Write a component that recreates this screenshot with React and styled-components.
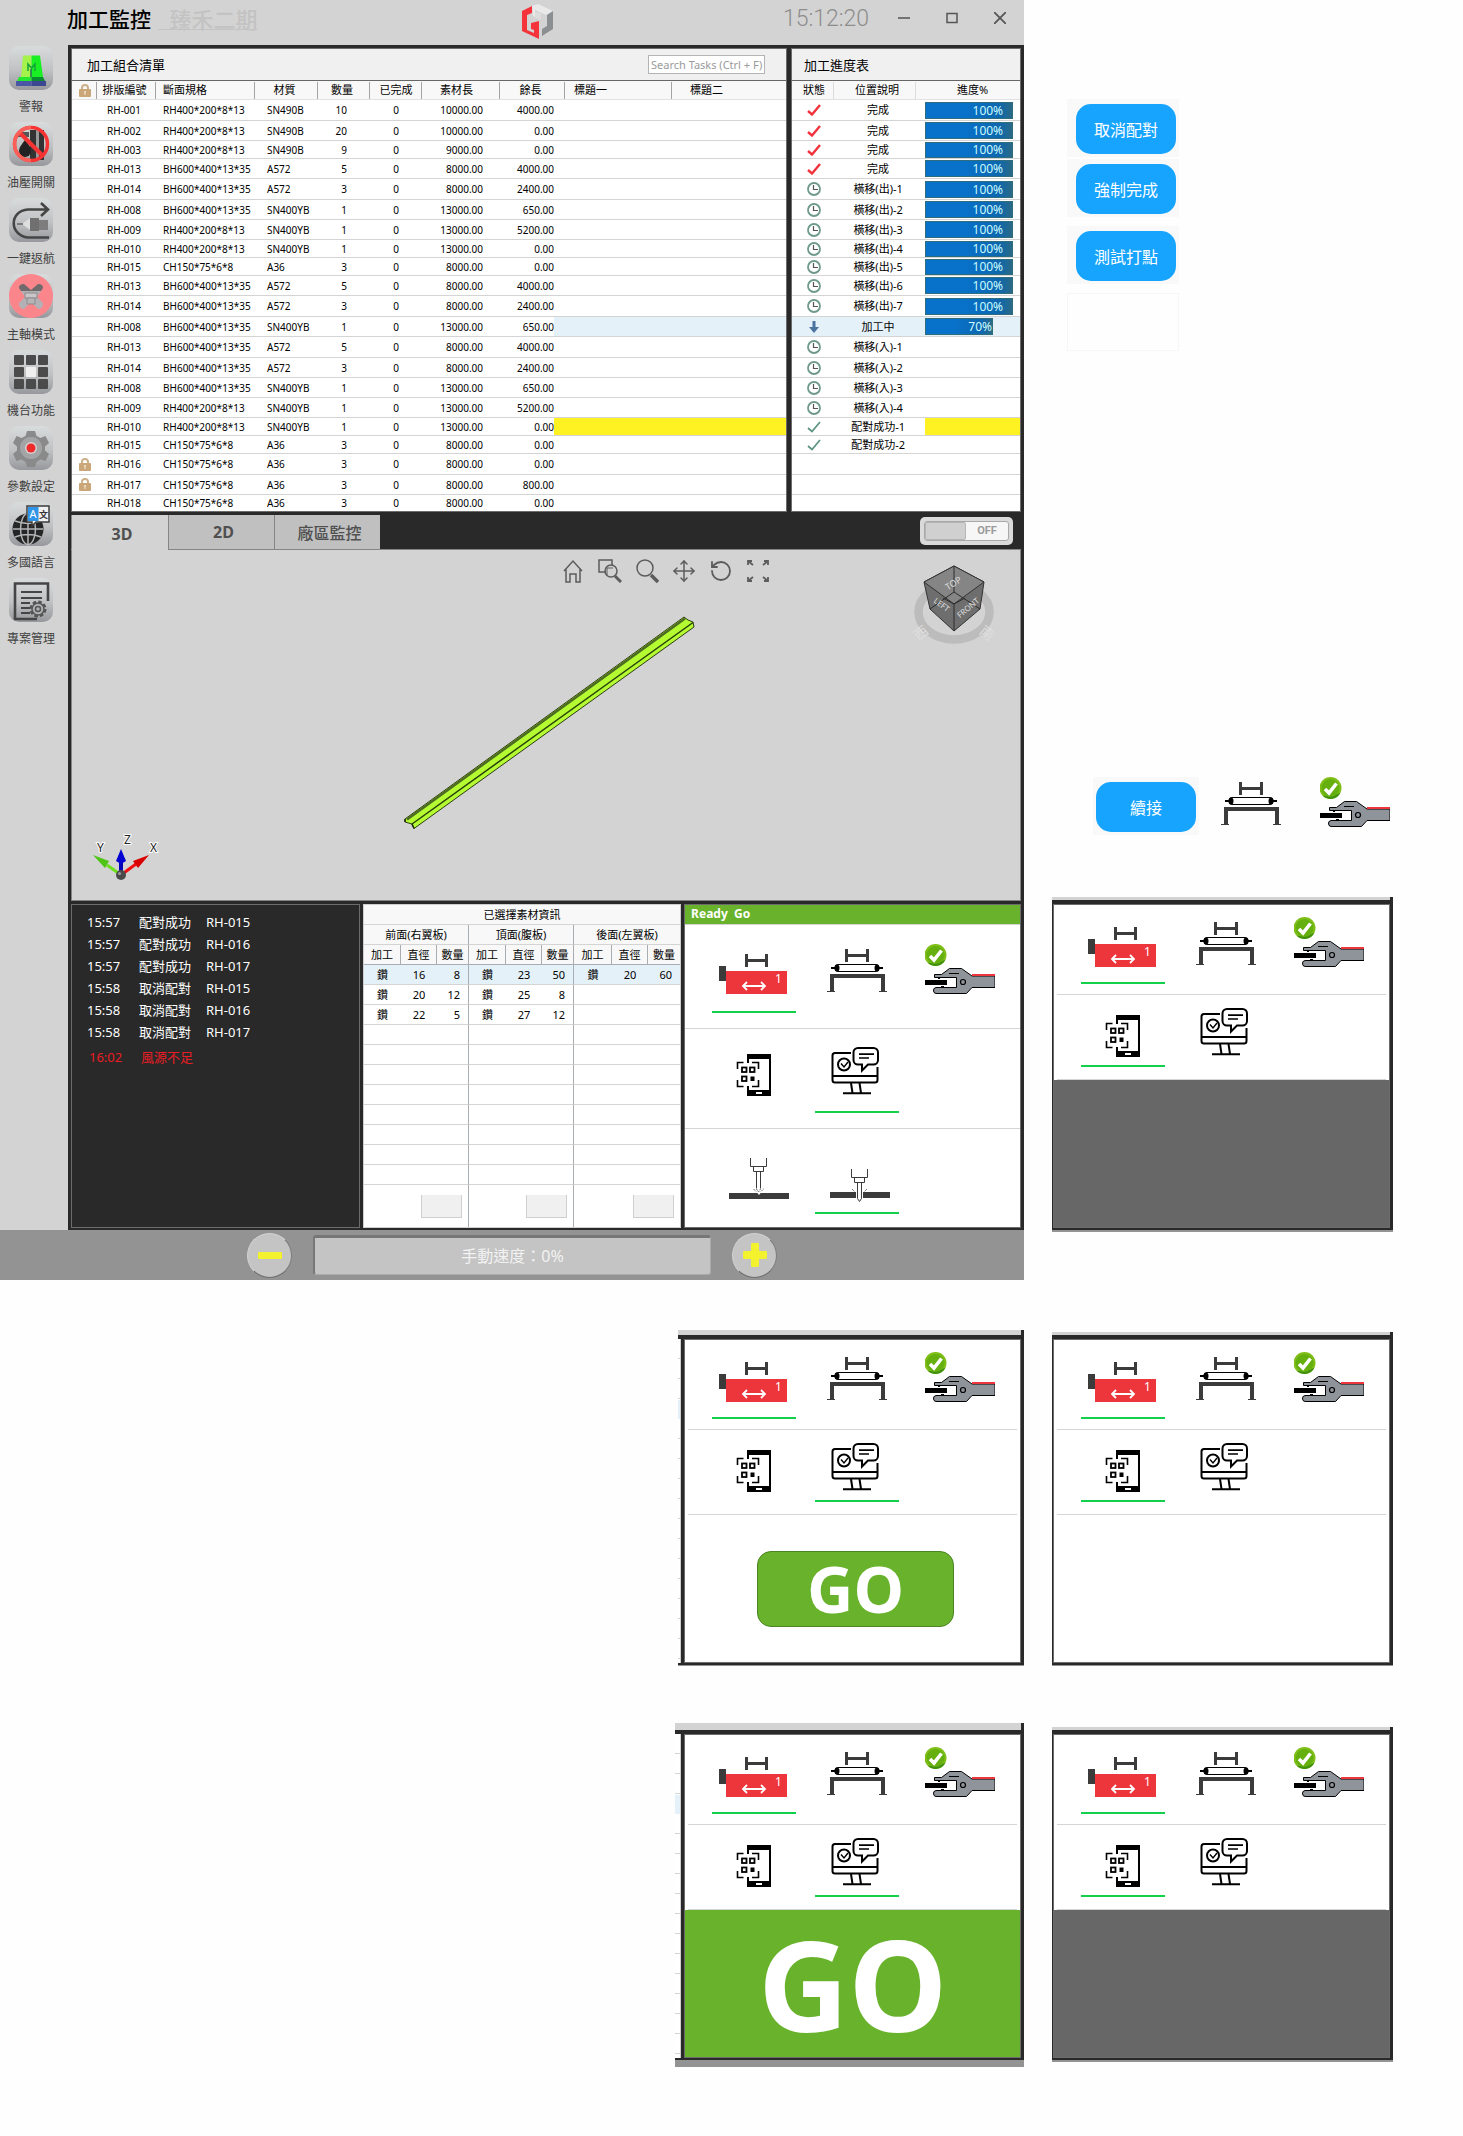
import React from "react";
import styled, { createGlobalStyle, css } from "styled-components";
import { Move, RotateCcw } from "lucide-react";

const INK = "#292929";
const EDGE = "#6c6c6c";
const SHELL = "#d3d3d3";
const RULE = "#d4d4d4";
const GREEN = "#68b22c";

const GlobalStyle = createGlobalStyle`
  *, *::before, *::after { box-sizing: border-box; }
  body {
    margin: 0;
    background: #fefefe;
    color: #000;
    font-family: "Noto Sans", "Noto Sans CJK TC", sans-serif;
    font-size: 11px;
  }
  button, input { font-family: inherit; }
  button { border: 0; padding: 0; background: none; cursor: pointer; }
  svg { display: block; flex: none; }
  table { border-collapse: separate; border-spacing: 0; table-layout: fixed; width: 100%; }
  th { font-weight: 400; }
`;

/* ---------- page ---------- */

const Page = styled.div`
  display: grid;
  grid-template-columns: 70% minmax(0, 1fr);
  padding-bottom: 69px;
`;

const LeftCell = styled.div`
  display: flex;
  justify-content: flex-end;
  align-items: flex-end;
  padding-top: ${(p) => p.$space}px;
`;

const RightCell = styled.div`
  display: flex;
  flex-direction: column;
  justify-content: ${(p) => (p.$low ? "flex-end" : "flex-start")};
  padding: ${(p) => p.$space}px 70px 0 28px;
`;

const Aside = styled.aside`
  display: flex;
  flex-direction: column;
  padding: 99px 70px 48px 28px;
`;

/* ---------- application window ---------- */

const AppWindow = styled.main`
  background: ${SHELL};
  display: flex;
  flex-direction: column;
`;

const TitleBar = styled.header`
  height: 45px;
  display: flex;
  align-items: flex-start;
`;

const TitleBlock = styled.div`
  flex: 0 0 51%;
  display: flex;
  padding-left: 67px;
  font-size: 21px;
  line-height: 38px;
`;

const Title = styled.h1`
  margin: 0;
  font-size: inherit;
  font-weight: 500;
`;

const Project = styled.span`
  color: #c3c3c3;
  font-size: 22px;
  font-weight: 500;
  margin-left: 7px;
  white-space: pre;
  text-decoration: underline;
  text-decoration-thickness: 1px;
`;

const LogoBox = styled.div`
  padding-top: 4px;
`;

const Clock = styled.time`
  margin-left: auto;
  margin-right: 11px;
  font-family: Roboto, sans-serif;
  font-size: 23px;
  font-weight: 300;
  line-height: 37px;
  color: #8d8d8d;
`;

const WindowButton = styled.button`
  width: 48px;
  height: 36px;
  display: grid;
  place-items: center;
`;

const Middle = styled.div`
  display: flex;
`;

const Sidebar = styled.nav`
  width: 68px;
  flex: none;
  padding: 1px 6px 0 0;
  display: flex;
  flex-direction: column;
  gap: 7px;
`;

const SideButton = styled.button`
  display: flex;
  flex-direction: column;
  align-items: center;
  gap: 9px;
  font-size: 12px;
  line-height: 16px;
  color: #3f3f3f;
`;

const SideTile = styled.span`
  width: 44px;
  height: 44px;
  border-radius: 10px;
  overflow: hidden;
  background: linear-gradient(#d9dcdc, #bfc1c2 55%, #97989d);
`;

const Frame = styled.div`
  flex: 1;
  min-width: 0;
  background: ${INK};
  padding: 3px 3px 2px;
  display: flex;
  flex-direction: column;
  gap: 3px;
`;

const Upper = styled.div`
  display: grid;
  grid-template-columns: minmax(0, 1fr) 230px;
  gap: 4px;
`;

const Panel = styled.section`
  background: #fff;
  border: 1px solid ${EDGE};
`;

const PanelHead = styled.div`
  height: 31px;
  background: #f0f0f0;
  display: flex;
  align-items: center;
  justify-content: space-between;
  padding: 0 21px 0 ${(p) => p.$inset}px;
`;

const PanelTitle = styled.h2`
  margin: 0;
  font-size: 13px;
  font-weight: 400;
`;

const SearchInput = styled.input`
  width: 117px;
  height: 19px;
  padding: 0;
  border: 1px solid #b4b4b4;
  background: #fff;
  font-size: 11px;
  text-align: center;
  &::placeholder { color: #9b9b9b; opacity: 1; }
`;

const DataTable = styled.table`
  font-size: 10px;
  line-height: 14px;
`;

const HeadRow = styled.tr`
  height: 20px;
  background: #f8f8f8;
`;

const HeadCell = styled.th`
  padding: 0 ${(p) => p.$right || 0}px 0 ${(p) => p.$left || 0}px;
  border-top: 1px solid #666;
  border-bottom: 1px solid #e2e2e2;
  font-size: 11px;
  text-align: ${(p) => p.$align || "center"};
  background: linear-gradient(${(p) => p.$rule || "#a4a4a4"}, ${(p) => p.$rule || "#a4a4a4"}) right center / 1px 17px no-repeat;
  &:last-child { background: none; }
  svg { margin: 0 auto; }
`;

const BodyRow = styled.tr`
  height: ${(p) => p.$height}px;
`;

const Cell = styled.td`
  padding: 0 ${(p) => p.$right || 0}px 0 ${(p) => p.$left || 0}px;
  border-bottom: 1px solid ${RULE};
  text-align: ${(p) => p.$align || "left"};
  font-size: ${(p) => p.$size || 10}px;
  background: ${(p) => p.$tint || "none"};
  white-space: nowrap;
  tr:last-child > & { border-bottom: 0; }
  svg { margin: 0 auto; }
`;

const Bar = styled.div`
  margin-left: 9px;
  height: ${(p) => p.$height}px;
  border: 1px solid #2f6c7c;
  background: linear-gradient(90deg, #0871c9 45%, #0d67ae 85%, #2a6a86);
  color: #cdfcff;
  font-size: 12px;
  line-height: ${(p) => p.$height - 2}px;
  text-align: right;
  padding-right: ${(p) => (p.$done ? 9 : 0)}px;
`;

/* ---------- tabs and viewer ---------- */

const ViewBlock = styled.section`
  display: flex;
  flex-direction: column;
`;

const TabBar = styled.div`
  height: 35px;
  display: flex;
`;

const Tab = styled.button`
  width: ${(p) => (p.$active ? 97 : 106)}px;
  padding-left: 4px;
  font-size: 16px;
  font-weight: ${(p) => (p.$cjk ? 500 : 700)};
  color: #505050;
  background: ${(p) => (p.$active ? SHELL : "#c0c0c0")};
  border-left: 1px solid #858585;
  border-bottom: 1px solid ${(p) => (p.$active ? SHELL : "#858585")};
  ${(p) => p.$active && css`padding-top: 4px;`}
`;

const TabFiller = styled.div`
  flex: 1;
  display: flex;
  justify-content: flex-end;
  padding: 2px 8px 0 0;
  border-bottom: 1px solid #858585;
`;

const Switch = styled.label`
  width: 93px;
  height: 28px;
  border-radius: 5px;
  background: #dadada;
  padding: 4px;
  position: relative;
  cursor: pointer;
`;

const SwitchInput = styled.input`
  position: absolute;
  inset: 0;
  margin: 0;
  opacity: 0;
`;

const SwitchTrack = styled.span`
  display: flex;
  height: 20px;
  border: 1px solid #a8a8a8;
  border-radius: 3px;
  background: #f6f6f6;
  color: #9b9b9b;
  font: 700 11px/18px Roboto, sans-serif;
  text-align: center;
`;

const SwitchKnob = styled.span`
  width: 41px;
  border: 1px solid #b5b5b5;
  border-radius: 2px;
  background: #d0d0d0;
`;

const SwitchText = styled.span`
  flex: 1;
`;

const Viewer = styled.div`
  position: relative;
  height: 351px;
  background: ${SHELL};
  border: solid #858585;
  border-width: 0 1px 1px;
`;

const ViewTools = styled.div`
  position: absolute;
  top: 9px;
  left: calc(51% + 5px);
  display: flex;
  gap: 13px;
  color: #5c5c5c;
`;

const ToolButton = styled.button`
  width: 24px;
  height: 24px;
  color: inherit;
`;

const Beam = styled.svg`
  position: absolute;
  top: 64px;
  left: calc(35% - 2px);
`;

const Cube = styled.svg`
  position: absolute;
  top: 13px;
  right: 22px;
`;

const Axes = styled.svg`
  position: absolute;
  left: 18px;
  bottom: 18px;
`;

/* ---------- lower row ---------- */

const Lower = styled.div`
  display: grid;
  grid-template-columns: 289px minmax(0, 1fr) 337px;
  gap: 3px;
  height: 324px;
`;

const Log = styled.ul`
  margin: 0;
  padding: 6px 15px;
  list-style: none;
  border: 1px solid ${EDGE};
  font-size: 13px;
  line-height: 22px;
  color: #fff;
`;

const LogLine = styled.li`
  display: grid;
  grid-template-columns: 52px 67px auto;
  ${(p) => p.$alert && css`color: #ec1c24; padding: 3px 0 0 2px;`}
`;

const InfoPanel = styled.section`
  background: #fff;
  border: 1px solid #cfcfcf;
`;

const InfoRow = styled.tr`
  height: ${(p) => (p.$foot ? 42 : 20)}px;
  line-height: 14px;
  background: ${(p) => (p.$head ? "#f8f8f8" : p.$picked ? "#e5f1f9" : "#fff")};
`;

const infoEdges = css`
  padding: 0;
  border-bottom: 1px solid ${(p) => (p.$strong ? "#a8adb2" : RULE)};
  border-right: ${(p) => (p.$rule ? "1px solid #a8adb2" : "0")};
`;

const InfoHead = styled.th`
  ${infoEdges}
`;

const InfoCell = styled.td`
  ${infoEdges}
  text-align: ${(p) => (p.$last ? "right" : "center")};
  ${(p) => p.$last && css`padding-right: 8px;`}
`;

const FootCell = styled.td`
  padding: 0 6px 0 0;
  border-right: ${(p) => (p.$rule ? "1px solid #a8adb2" : "0")};
`;

const FootButton = styled.button`
  display: block;
  margin-left: auto;
  width: 41px;
  height: 23px;
  background: #f0f0f0;
  border: solid #cfcfcf;
  border-width: 0 1px 1px;
`;

/* ---------- step panels ---------- */

const StepBody = styled.div`
  flex: 1;
  min-width: 0;
  background: #fff;
  border: 1px solid ${EDGE};
  display: flex;
  flex-direction: column;
`;

const ReadyHead = styled.h2`
  margin: 0;
  height: 20px;
  padding-left: 6px;
  background: ${GREEN};
  border-bottom: 1px solid ${RULE};
  color: #fff;
  font-size: 12px;
  font-weight: 700;
  line-height: 18px;
  white-space: pre;
`;

const StepRow = styled.div`
  height: ${(p) => p.$height}px;
  margin: 0 ${(p) => p.$inset || 0}px;
  padding: ${(p) => p.$top}px ${(p) => 9 - (p.$inset || 0)}px 0 ${(p) => 18 - (p.$inset || 0)}px;
  border-bottom: ${(p) => (p.$last ? "0" : `1px solid ${RULE}`)};
  display: grid;
  grid-template-columns: repeat(3, 1fr);
  align-items: start;
`;

const StepButton = styled.button`
  display: flex;
  flex-direction: column;
  align-items: center;
  gap: ${(p) => p.$gap}px;
  &::after {
    content: "";
    width: 84px;
    height: 2px;
    background: ${(p) => (p.$active ? "#12d049" : "transparent")};
  }
`;

const Card = styled.section`
  width: ${(p) => (p.$width ? `${p.$width}px` : "auto")};
  background: ${INK};
`;

const Strip = styled.div`
  height: ${(p) => p.$height}px;
  margin-right: ${(p) => (p.$low ? 0 : 3)}px;
  background: ${(p) => (p.$low ? "#939393" : SHELL)};
`;

const CardRow = styled.div`
  display: flex;
  padding: ${(p) => (p.$sliver ? "0 3px 0 0" : "0 3px 0 1px")};
  margin: 4px 0 2px;
  height: 324px;
`;

const TableSliver = styled.div`
  width: ${(p) => p.$width}px;
  margin-right: 3px;
  border-right: 1px solid #cfcfcf;
  background:
    linear-gradient(#e5f1f9, #e5f1f9) 0 61px / 100% 19px no-repeat,
    repeating-linear-gradient(#fff 0 19px, ${RULE} 19px 20px);
`;

const FinalArea = styled.div`
  flex: 1;
  display: grid;
  place-items: center;
  padding-left: 6px;
  background: ${(p) => (p.$muted ? "#676767" : "#fff")};
`;

const GoButton = styled.button`
  width: 197px;
  height: 76px;
  border: 1px solid #4b8523;
  border-radius: 14px;
  background: ${GREEN};
  color: #fff;
  font-size: 64px;
  font-weight: 700;
  line-height: 72px;
`;

const GoArea = styled.button`
  flex: 1;
  background: ${GREEN};
  color: #fff;
  font-size: 125px;
  font-weight: 700;
  line-height: 144px;
`;

/* ---------- speed bar ---------- */

const SpeedBar = styled.footer`
  height: 50px;
  background: #939393;
  display: flex;
  align-items: center;
  justify-content: center;
  gap: 21px;
`;

const RoundButton = styled.button`
  width: 45px;
  height: 45px;
  border-radius: 50%;
  display: grid;
  place-items: center;
  background: #c4c4c4;
  border: 1px solid;
  border-color: #d2d2d2 #7b7b7b #6c6c6c #d2d2d2;
`;

const SpeedValue = styled.output`
  width: 398px;
  height: 40px;
  border: solid;
  border-width: 3px 1px 1px 2px;
  border-color: #777 #aaa #aaa #777;
  border-radius: 3px;
  background: #c4c4c4;
  color: #f2f2f2;
  font-size: 16px;
  line-height: 36px;
  text-align: center;
`;

/* ---------- actions beside the window ---------- */

const ActionStack = styled.div`
  margin-left: 15px;
  width: 112px;
  display: flex;
  flex-direction: column;
  gap: 9px;
`;

const ActionPair = styled.div`
  display: flex;
  flex-direction: column;
  gap: 2px;
`;

const ActionSlot = styled.div`
  height: 58px;
  padding: 5px 3px 3px ${(p) => p.$left || 9}px;
  background: #f9f9f9;
`;

const EmptySlot = styled.div`
  height: 58px;
  border: 1px solid #f6f6f6;
`;

const ActionButton = styled.button`
  display: block;
  width: 100%;
  height: 50px;
  border-radius: 15px;
  background: #17a4ff;
  color: #fff;
  font-size: 16px;
`;

const JointRow = styled.div`
  margin: auto 0 62px 41px;
  display: grid;
  grid-template-columns: 106px 104px 104px;
  justify-items: center;
  align-items: start;
`;

const JointSlot = styled(ActionSlot)`
  width: 106px;
`;

/* ---------- drawings ---------- */

const Logo = () => (
  <svg width="31" height="35" viewBox="0 0 31 35" aria-label="logo">
    <path d="M10 2 L0 7 V27 L17 35 V17 L9 19 V25 L12 26 V29 L5 26 V11 L10 9Z" fill="#f4343a" />
    <path d="M10 2 L16 0 L31 7 L24 11 L13 6 V13 L11 12Z" fill="#e9e9e9" />
    <path d="M31 7 V25 L20 32 V25 L25 22 V11Z" fill="#8c8f91" />
    <path d="M13 8 L19 9 V16 L13 14Z" fill="#dcdcdc" />
  </svg>
);

const Lock = () => (
  <svg width="12" height="13" viewBox="0 0 12 13">
    <path d="M3 6V4a3 3 0 0 1 6 0v2" fill="none" stroke="#cdb08c" strokeWidth="2" />
    <rect x="0" y="5" width="12" height="8" rx="1" fill="#cba679" />
    <path d="M6 7v4M5 8h2" stroke="#f5e8d4" strokeWidth="1" />
  </svg>
);

const StatusIcon = ({ kind }) => {
  if (kind === "done" || kind === "paired") {
    return (
      <svg width="14" height="12" viewBox="0 0 14 12">
        <path d="M1 7L5 10.5L13 1" fill="none" stroke={kind === "done" ? "#f2323a" : "#5e9583"} strokeWidth={kind === "done" ? 2.4 : 1.8} />
      </svg>
    );
  }
  if (kind === "wait") {
    return (
      <svg width="14" height="14" viewBox="0 0 14 14" fill="none" stroke="#6f9a8b">
        <circle cx="7" cy="7" r="6" strokeWidth="1.8" />
        <path d="M6.5 3v4.5H11" stroke="#555" strokeWidth="1.2" />
      </svg>
    );
  }
  if (kind === "run") {
    return (
      <svg width="10" height="12" viewBox="0 0 10 12">
        <path d="M3.5 0h3v6H10L5 12L0 6h3.5z" fill="#4a739f" />
      </svg>
    );
  }
  return null;
};

const SideArt = {
  alarm: (
    <>
      <path d="M14 9.500h8.500V31H12z" fill="#a4f24c" />
      <path d="M22.500 9.500H31L34 31H22.500z" fill="#18f024" />
      <path d="M8 35l2-4h12.500v4z" fill="#22e82e" />
      <path d="M22.500 31H34l2 4H22.500z" fill="#0a8c30" />
      <rect x="7" y="35" width="15.500" height="5" fill="#4a57a6" />
      <rect x="22.500" y="35" width="14.500" height="5" fill="#3b4790" />
      <path d="M19 25v-7l3.500 4L26 18v7" fill="none" stroke="#14a33a" strokeWidth="1.500" />
      <path d="M22 23v8" stroke="#1c6b50" strokeWidth="1.500" />
    </>
  ),
  oil: (
    <>
      <rect x="21" y="8" width="14" height="30" fill="#333" />
      <rect x="27" y="8" width="3" height="30" fill="#999" />
      <path d="M8 10h12v5H8z" fill="#555" />
      <path d="M16 18c5 6 6 8 6 11a6 6 0 0 1-12 0c0-3 2-6 6-11z" fill="#222" />
      <circle cx="22" cy="22" r="16.500" fill="none" stroke="#f63434" strokeWidth="3.500" />
      <path d="M11 11L33 33" stroke="#f63434" strokeWidth="4" />
      <path d="M22 5.500a16.500 16.500 0 0 0 0 33" fill="none" stroke="#fa6058" strokeWidth="3.500" />
    </>
  ),
  home: (
    <>
      <path d="M40 39.500H19C0 37 0 13 19 11.500H38M32 5L39 11.500L32 18" fill="none" stroke="#454545" strokeWidth="2.600" />
      <rect x="30" y="22" width="9" height="10" fill="#7d7d7d" />
      <rect x="21" y="20" width="9" height="13" fill="#707070" />
      <path d="M21 20L13 26L21 32z" fill="#dedede" />
      <path d="M8 26h6" stroke="#666" strokeWidth="1.500" />
    </>
  ),
  spindle: (
    <>
      <circle cx="22" cy="22" r="22" fill="#fa868c" />
      <path d="M10 14c0-3 2-4 5-4l7 6l7-6c3 0 5 1 5 4l-2 3H12z" fill="#6f6a6c" />
      <path d="M12 17h20l-4 6l6 6c0 4-2 6-5 6l-7-7l-7 7c-3 0-5-2-5-6l6-6z" fill="#b3b1b5" />
      <rect x="16" y="19" width="12" height="5" fill="#c9c6c9" stroke="#8d8a8c" />
      <path d="M18 24h8v6h-8z" fill="#b7b4b8" stroke="#8d8a8c" />
    </>
  ),
  grid: (
    <>
      {[5, 17, 29].map((y) =>
        [5, 17, 29].map((x) => (
          <rect key={`${x}-${y}`} x={x} y={y} width="10" height="10" rx="1" fill={x === 17 && y === 17 ? "#efefef" : "#4b4b4b"} />
        ))
      )}
    </>
  ),
  gear: (
    <>
      <path d="M18 5h8l1.500 5l4 2l5-2l3.500 7l-4 3.500v4l4 3.500l-3.500 7l-5-1.500l-4 2.500l-1.500 5h-8l-1.500-5l-4-2.500l-5 1.500L4 28l4-3.500v-4L4 17l3.500-7l5 2l4-2z" fill="#8a8a8a" />
      <circle cx="22" cy="22" r="11" fill="#a3a4a5" />
      <circle cx="22" cy="22" r="6" fill="#d8d0d0" />
      <circle cx="22" cy="22" r="4.500" fill="#ee2b2b" />
    </>
  ),
  language: (
    <>
      <circle cx="19" cy="27" r="15.500" fill="#262626" />
      <g fill="none" stroke="#b4b5b6" strokeWidth="1.500">
        <ellipse cx="19" cy="27" rx="7.500" ry="15.500" />
        <path d="M19 12v30M4 27h30M6 19c8 3 18 3 26 0M6 35c8-3 18-3 26 0" />
      </g>
      <path d="M18 4h22v16H27l-4 4v-4h-5z" fill="#f1f1f1" stroke="#3d3d3d" strokeWidth="1.500" />
      <rect x="19" y="5" width="10.500" height="14" fill="#2f95e8" />
      <text x="20.500" y="16" fontSize="11" fill="#fff">A</text>
      <text x="30" y="16" fontSize="9" fontWeight="700" fill="#333">文</text>
    </>
  ),
  project: (
    <>
      <path d="M39 23V5.500H6V41H28" fill="none" stroke="#454545" strokeWidth="2.600" />
      <path d="M12 14h21M12 20h21M12 25h9M12 30h9M12 35h9" stroke="#454545" strokeWidth="2.200" />
      <circle cx="29" cy="31" r="7" fill="none" stroke="#555" strokeWidth="3" strokeDasharray="3.500 2" />
      <circle cx="29" cy="31" r="6" fill="#aeb0b2" stroke="#555" strokeWidth="1.500" />
      <circle cx="29" cy="31" r="2.500" fill="none" stroke="#555" strokeWidth="1.500" />
    </>
  ),
};

const DARK = "#3b3b3b";

const StepArt = {
  feed: (
    <>
      <path d="M26 10h3v5h17v-5h3v13h-3v-5H29v5h-3z" fill={DARK} />
      <rect x="0" y="22" width="7" height="15" fill={DARK} />
      <rect x="7" y="27" width="61" height="23" fill="#ed363c" />
      <path d="M24 42h22M28 38l-4 4l4 4M42 38l4 4l-4 4" fill="none" stroke="#fff" strokeWidth="1.800" />
      <text x="56" y="39" fontSize="12" fill="#fff">1</text>
    </>
  ),
  roller: (
    <>
      <path d="M23 5h3v5h18V5h3v13h-3v-5H26v5h-3z" fill={DARK} />
      <path d="M9 24h52" stroke="#000" strokeWidth="2" />
      <rect x="13" y="20.500" width="44" height="7" rx="3" fill="#fff" stroke="#000" />
      <ellipse cx="15" cy="24" rx="2.500" ry="3.500" />
      <ellipse cx="55" cy="24" rx="2.500" ry="3.500" />
      <path d="M8 30h55v17h2v1h-8v-1h2V34H12v13h1v1H5v-1h3z" fill={DARK} />
    </>
  ),
  clamp: (
    <>
      <circle cx="10.500" cy="11" r="11" fill="#7fbf17" />
      <path d="M2.500 18.500a11 11 0 0 0 18-3a24 24 0 0 1-18 3z" fill="#3f8f10" />
      <circle cx="10.500" cy="11" r="9" fill="#65b00f" />
      <path d="M5 12l4 4l7.500-9.500" fill="none" stroke="#fff" strokeWidth="3.600" />
      <path d="M9.500 30.500h7L24.500 24.500h12L47 32h23v11.500H47l-5.500 6H12a3 3 0 0 1-1-6h20.500v-10H9.500z" fill="#8f949b" stroke="#000" />
      <path d="M47 31h23" stroke="#ed363c" strokeWidth="2" />
      <rect x="0" y="36" width="22" height="5" fill="#000" />
      <circle cx="38" cy="38" r="2.500" fill="none" stroke="#000" strokeWidth="1.200" />
      <path d="M24 29.500h10M13 34.500h2M16 42.500h3" stroke="#000" strokeWidth="1.200" />
    </>
  ),
  phone: (
    <>
      <path d="M29 16V8h22v40H29v-9" fill="none" stroke="#000" strokeWidth="2" />
      <rect x="28" y="7" width="24" height="5" rx="1" />
      <rect x="28" y="43" width="24" height="6" rx="1" />
      <rect x="37" y="45" width="6" height="2" fill="#fff" />
      <path d="M18.500 22v-6.500h6M33 15.500h6.500V22M18.500 33v6.500h6M33 39.500h6.500V33" fill="none" stroke="#000" strokeWidth="1.600" />
      <g fill="none" stroke="#000" strokeWidth="1.800">
        <rect x="23" y="20.500" width="4.500" height="4.500" />
        <rect x="31" y="20.500" width="4.500" height="4.500" />
        <rect x="23" y="29.500" width="4.500" height="4.500" />
      </g>
      <rect x="31.500" y="29.500" width="4" height="4.500" />
    </>
  ),
  monitor: (
    <g fill="none" stroke="#000" strokeWidth="2" transform="translate(-2 0)">
      <path d="M31 6H15a2.500 2.500 0 0 0-2.500 2.500V33a2.500 2.500 0 0 0 2.500 2.500h40a2.500 2.500 0 0 0 2.500-2.500V20" />
      <path d="M13 29h44M31 36l1.500 10M39.500 36l1.500 10M23 46.200h28" />
      <circle cx="24" cy="17.500" r="6" />
      <path d="M21 16.500l3 3.500l4-5" strokeWidth="1.400" />
      <path d="M38 1h15.500a4.500 4.500 0 0 1 4.500 4.500v7.500a4.500 4.500 0 0 1-4.500 4.500H48l-6 6v-6h-4a4.500 4.500 0 0 1-4.500-4.500V5.500A4.500 4.500 0 0 1 38 1z" />
      <path d="M39 7.200h15M39 11h10" strokeWidth="1.700" />
    </g>
  ),
  drillAbove: (
    <g transform="translate(5 0)">
      <rect x="5" y="35" width="60" height="6" fill={DARK} />
      <path d="M33 34.500h4l-2 2.500z" fill="#fff" />
      <g fill="none" stroke={DARK}>
        <path d="M26.500 0v8.500h16V0M29.500 8.500v5h10v-5M32.500 13.500v17M36.500 13.500v17" />
        <path d="M32.500 31l2 3l2-3M29.500 31l3 3M39.500 31l-3 3" strokeDasharray="1 1" />
      </g>
    </g>
  ),
  drillThrough: (
    <g transform="translate(3 0)">
      <rect x="5" y="34" width="26" height="6" fill={DARK} />
      <rect x="38" y="34" width="27" height="6" fill={DARK} />
      <g fill="none" stroke={DARK}>
        <path d="M26.500 11v8.500h16V11M29.500 19.500v5h10v-5M32.500 24.500v16l2 3l2-3v-16" />
        <path d="M27 31l3 3M42 31l-3 3" strokeDasharray="1 1" />
      </g>
    </g>
  ),
};

const StepIcon = ({ name }) => (
  <svg width="70" height="50" viewBox="0 0 70 50">{StepArt[name]}</svg>
);

const BeamArt = () => (
  <Beam width="296" height="218" viewBox="402 614 296 218">
    <path d="M405 819L684 617L688 620L693 622L694 627L414 828.500L412 824L405 822z" fill="#b4fb32" stroke="#2b3c10" />
    <path d="M407 819.500L685 618.500" stroke="#4c6a22" strokeWidth="2.400" />
    <path d="M412 824L693 622.500" stroke="#27400a" strokeWidth="1.500" />
    <path d="M412 824l2 4.500M405 819v3" stroke="#1d2a08" strokeWidth="1.500" />
  </Beam>
);

const CubeArt = () => (
  <Cube width="88" height="84" viewBox="910 562 88 84">
    <ellipse cx="954" cy="611" rx="35.500" ry="27.500" fill="none" stroke="#bcbcbc" strokeWidth="8.500" />
    <path d="M954 565L984 581L980 608L954 630L930 608L924 581z" fill="#6e6e6e" stroke="#333" />
    <path d="M954 565L984 581L954 603L924 581z" fill="#858585" stroke="#333" />
    <path d="M954 603V630M954 565V591L930 608M954 591L980 608M943 597L954 603L965 597" fill="none" stroke="#2d2d2d" />
    <g fill="#dedede" textAnchor="middle">
      <text transform="translate(955 585) rotate(-32)" fontSize="9">TOP</text>
      <text transform="translate(940 606) rotate(36)" fontSize="8">LEFT</text>
      <text transform="translate(970 609) rotate(-40)" fontSize="8">FRONT</text>
      <text transform="translate(924 636) rotate(-38)" fontSize="14">西</text>
      <text transform="translate(984 636) rotate(38)" fontSize="14">南</text>
    </g>
  </Cube>
);

const AxesArt = () => (
  <Axes width="72" height="50" viewBox="90 832 72 50">
    <path d="M121 875L107 865" stroke="#6de01e" strokeWidth="3" />
    <path d="M93 855L109 861L105 868z" fill="#4fc414" />
    <path d="M121 875L136 864" stroke="#f01010" strokeWidth="3" />
    <path d="M149 855L133 861L138 868z" fill="#d80000" />
    <path d="M121 874V860" stroke="#0000b4" strokeWidth="4" />
    <path d="M121 849L126 861L121 864L116 861z" fill="#0000d2" />
    <circle cx="121" cy="875" r="5" fill="#4a4a4a" />
    <circle cx="119.500" cy="873.500" r="1.600" fill="#999" />
    <g fontSize="12" fill="#222" stroke="#fff" strokeWidth="2" paintOrder="stroke">
      <text x="97" y="852">Y</text>
      <text x="124" y="844">Z</text>
      <text x="150" y="852">X</text>
    </g>
  </Axes>
);

const viewTools = [
  ["首頁", <path key="a" d="M3 12L12 2L21 12M5 10v13h4v-8h6v8h4V10" />],
  ["框選縮放", <g key="b"><path d="M8 13H1V1h13v5" /><circle cx="13" cy="12" r="6" /><path d="M9 16V9h6" strokeWidth="1" /><path d="M17 17l6 6" strokeWidth="3" /></g>],
  ["縮放", <g key="c"><circle cx="10" cy="9" r="8" /><path d="M16 16l7 7" strokeWidth="3.500" /></g>],
  ["平移", null],
  ["旋轉", null],
  ["全螢幕", <g key="f"><path d="M2 6V2h4M22 6V2h-4M2 18v4h4M22 18v4h-4" strokeWidth="1.800" /><path d="M2 2l5 4M22 2l-5 4M2 22l5-4M22 22l-5-4" strokeWidth="1.800" /></g>],
];

/* ---------- data ---------- */

const sideItems = [
  ["alarm", "警報"],
  ["oil", "油壓開關"],
  ["home", "一鍵返航"],
  ["spindle", "主軸模式"],
  ["grid", "機台功能"],
  ["gear", "參數設定"],
  ["language", "多國語言"],
  ["project", "專案管理"],
];

const rowHeights = [21, 20, 18, 20, 21, 20, 20, 18, 18, 20, 21, 20, 21, 20, 20, 20, 18, 18, 21, 20, 16];

const jobs = [
  ["RH-001", "RH400*200*8*13", "SN490B", 10, "10000.00", "4000.00"],
  ["RH-002", "RH400*200*8*13", "SN490B", 20, "10000.00", "0.00"],
  ["RH-003", "RH400*200*8*13", "SN490B", 9, "9000.00", "0.00"],
  ["RH-013", "BH600*400*13*35", "A572", 5, "8000.00", "4000.00"],
  ["RH-014", "BH600*400*13*35", "A572", 3, "8000.00", "2400.00"],
  ["RH-008", "BH600*400*13*35", "SN400YB", 1, "13000.00", "650.00"],
  ["RH-009", "RH400*200*8*13", "SN400YB", 1, "13000.00", "5200.00"],
  ["RH-010", "RH400*200*8*13", "SN400YB", 1, "13000.00", "0.00"],
  ["RH-015", "CH150*75*6*8", "A36", 3, "8000.00", "0.00"],
  ["RH-013", "BH600*400*13*35", "A572", 5, "8000.00", "4000.00"],
  ["RH-014", "BH600*400*13*35", "A572", 3, "8000.00", "2400.00"],
  ["RH-008", "BH600*400*13*35", "SN400YB", 1, "13000.00", "650.00", "#e5f1f9"],
  ["RH-013", "BH600*400*13*35", "A572", 5, "8000.00", "4000.00"],
  ["RH-014", "BH600*400*13*35", "A572", 3, "8000.00", "2400.00"],
  ["RH-008", "BH600*400*13*35", "SN400YB", 1, "13000.00", "650.00"],
  ["RH-009", "RH400*200*8*13", "SN400YB", 1, "13000.00", "5200.00"],
  ["RH-010", "RH400*200*8*13", "SN400YB", 1, "13000.00", "0.00", "#fff222"],
  ["RH-015", "CH150*75*6*8", "A36", 3, "8000.00", "0.00"],
  ["RH-016", "CH150*75*6*8", "A36", 3, "8000.00", "0.00", null, true],
  ["RH-017", "CH150*75*6*8", "A36", 3, "8000.00", "800.00", null, true],
  ["RH-018", "CH150*75*6*8", "A36", 3, "8000.00", "0.00"],
];

const progress = [
  ["done", "完成", 100], ["done", "完成", 100], ["done", "完成", 100], ["done", "完成", 100],
  ["wait", "橫移(出)-1", 100], ["wait", "橫移(出)-2", 100], ["wait", "橫移(出)-3", 100],
  ["wait", "橫移(出)-4", 100], ["wait", "橫移(出)-5", 100], ["wait", "橫移(出)-6", 100],
  ["wait", "橫移(出)-7", 100], ["run", "加工中", 70],
  ["wait", "橫移(入)-1"], ["wait", "橫移(入)-2"], ["wait", "橫移(入)-3"], ["wait", "橫移(入)-4"],
  ["paired", "配對成功-1"], ["paired", "配對成功-2"], [], [], [],
];

const logLines = [
  ["15:57", "配對成功", "RH-015"],
  ["15:57", "配對成功", "RH-016"],
  ["15:57", "配對成功", "RH-017"],
  ["15:58", "取消配對", "RH-015"],
  ["15:58", "取消配對", "RH-016"],
  ["15:58", "取消配對", "RH-017"],
];

const drillRows = [
  ["鑽", 16, 8, "鑽", 23, 50, "鑽", 20, 60],
  ["鑽", 20, 12, "鑽", 25, 8, "", "", ""],
  ["鑽", 22, 5, "鑽", 27, 12, "", "", ""],
  ...Array.from({ length: 8 }, () => Array(9).fill("")),
];

const stepNames = {
  feed: "進料",
  roller: "輥道",
  clamp: "夾具",
  phone: "掃碼",
  monitor: "遠端",
  drillAbove: "打點",
  drillThrough: "鑽孔",
};

/* ---------- parts ---------- */

function JobTable() {
  return (
    <Panel>
      <PanelHead $inset={15}>
        <PanelTitle>加工組合清單</PanelTitle>
        <SearchInput type="text" aria-label="Search Tasks" placeholder="Search Tasks (Ctrl + F)" />
      </PanelHead>
      <DataTable>
        <colgroup>
          {[25, 59, 99, 63, 52, 52, 78, 65, 107].map((w, i) => <col key={i} width={w} />)}
          <col />
        </colgroup>
        <thead>
          <HeadRow>
            <HeadCell scope="col"><Lock /></HeadCell>
            <HeadCell scope="col" $right={4}>排版編號</HeadCell>
            <HeadCell scope="col" $align="left" $left={7}>斷面規格</HeadCell>
            <HeadCell scope="col" $right={4}>材質</HeadCell>
            <HeadCell scope="col" $right={4}>數量</HeadCell>
            <HeadCell scope="col">已完成</HeadCell>
            <HeadCell scope="col" $right={9}>素材長</HeadCell>
            <HeadCell scope="col" $right={4}>餘長</HeadCell>
            <HeadCell scope="col" $align="left" $left={9}>標題一</HeadCell>
            <HeadCell scope="col" $align="left" $left={18}>標題二</HeadCell>
          </HeadRow>
        </thead>
        <tbody>
          {jobs.map(([id, spec, material, count, length, rest, tint, locked], i) => (
            <BodyRow key={i} $height={rowHeights[i]}>
              <Cell>{locked && <Lock />}</Cell>
              <Cell $left={10}>{id}</Cell>
              <Cell $left={7}>{spec}</Cell>
              <Cell $left={12}>{material}</Cell>
              <Cell $align="right" $right={23}>{count}</Cell>
              <Cell $align="center">0</Cell>
              <Cell $align="right" $right={17}>{length}</Cell>
              <Cell $align="right" $right={11} $tint={tint && `linear-gradient(${tint}, ${tint}) right / 11px 100% no-repeat`}>{rest}</Cell>
              <Cell $tint={tint} />
              <Cell $tint={tint} />
            </BodyRow>
          ))}
        </tbody>
      </DataTable>
    </Panel>
  );
}

function ProgressTable() {
  return (
    <Panel>
      <PanelHead $inset={12}>
        <PanelTitle>加工進度表</PanelTitle>
      </PanelHead>
      <DataTable>
        <colgroup>
          <col width="42" />
          <col width="82" />
          <col />
        </colgroup>
        <thead>
          <HeadRow>
            <HeadCell scope="col" $left={2} $rule="#dcdcdc">狀態</HeadCell>
            <HeadCell scope="col" $left={4} $rule="#dcdcdc">位置說明</HeadCell>
            <HeadCell scope="col" $left={9}>進度%</HeadCell>
          </HeadRow>
        </thead>
        <tbody>
          {progress.map(([kind, text, value], i) => {
            const running = kind === "run" ? "#e5f1f9" : undefined;
            const matched = i === 16 ? "linear-gradient(#fff222, #fff222) right / calc(100% - 9px) 100% no-repeat" : running;
            return (
              <BodyRow key={i} $height={rowHeights[i]}>
                <Cell $align="center" $left={2} $tint={running}><StatusIcon kind={kind} /></Cell>
                <Cell $align="center" $left={6} $size={11} $tint={running}>{text}</Cell>
                <Cell $right={7} $tint={matched}>
                  {value && (
                    <Bar $height={rowHeights[i] > 18 ? 17 : 16} $done={value === 100} style={{ width: value === 100 ? undefined : `${value}%` }}>
                      {value}%
                    </Bar>
                  )}
                </Cell>
              </BodyRow>
            );
          })}
        </tbody>
      </DataTable>
    </Panel>
  );
}

function ModelView() {
  return (
    <ViewBlock>
      <TabBar>
        <Tab $active>3D</Tab>
        <Tab>2D</Tab>
        <Tab $cjk>廠區監控</Tab>
        <TabFiller>
          <Switch>
            <SwitchInput type="checkbox" aria-label="監控開關" />
            <SwitchTrack>
              <SwitchKnob />
              <SwitchText>OFF</SwitchText>
            </SwitchTrack>
          </Switch>
        </TabFiller>
      </TabBar>
      <Viewer>
        <BeamArt />
        <AxesArt />
        <CubeArt />
        <ViewTools>
          {viewTools.map(([label, art], i) => (
            <ToolButton key={label} aria-label={label}>
              {art ? (
                <svg width="24" height="24" viewBox="0 0 24 24" fill="none" stroke="currentColor" strokeWidth="1.500">{art}</svg>
              ) : i === 3 ? <Move size={24} strokeWidth={1.5} /> : <RotateCcw size={24} strokeWidth={1.8} />}
            </ToolButton>
          ))}
        </ViewTools>
      </Viewer>
    </ViewBlock>
  );
}

function MaterialInfo() {
  return (
    <InfoPanel>
      <table>
        <colgroup>
          {[37, 36, 32, 37, 36, 32].map((w, i) => <col key={i} width={w} />)}
          <col />
          <col width="36" />
          <col width="32" />
        </colgroup>
        <thead>
          <InfoRow $head>
            <InfoHead colSpan={9}>已選擇素材資訊</InfoHead>
          </InfoRow>
          <InfoRow $head>
            <InfoHead colSpan={3} $rule>前面(右翼板)</InfoHead>
            <InfoHead colSpan={3} $rule>頂面(腹板)</InfoHead>
            <InfoHead colSpan={3}>後面(左翼板)</InfoHead>
          </InfoRow>
          <InfoRow $head>
            {["加工", "直徑", "數量", "加工", "直徑", "數量", "加工", "直徑", "數量"].map((t, i) => (
              <InfoHead key={i} scope="col" $strong $rule={i < 8}>{t}</InfoHead>
            ))}
          </InfoRow>
        </thead>
        <tbody>
          {drillRows.map((row, r) => (
            <InfoRow key={r} $picked={r === 0}>
              {row.map((v, i) => (
                <InfoCell key={i} $last={i % 3 === 2} $rule={i === 2 || i === 5}>{v}</InfoCell>
              ))}
            </InfoRow>
          ))}
          <InfoRow $foot>
            {[0, 1, 2].map((i) => (
              <FootCell key={i} colSpan={3} $rule={i < 2}>
                <FootButton aria-label="確認" />
              </FootCell>
            ))}
          </InfoRow>
        </tbody>
      </table>
    </InfoPanel>
  );
}

function Steps({ names, active, ...row }) {
  const { $gap, ...rest } = row;
  return (
    <StepRow {...rest}>
      {names.map((n) => (
        <StepButton key={n} $gap={$gap} $active={n === active} aria-label={stepNames[n]}>
          <StepIcon name={n} />
        </StepButton>
      ))}
    </StepRow>
  );
}

function StepCard({ width, sliver, top, bottom, second, children }) {
  return (
    <Card $width={width}>
      <Strip $height={top} />
      <CardRow $sliver={sliver}>
        {sliver && <TableSliver $width={sliver} />}
        <StepBody>
          <Steps names={["feed", "roller", "clamp"]} active="feed" $height={90} $top={12} $gap={15} $inset={3} />
          <Steps names={["phone", "monitor"]} active={second} $height={85} $top={13} $gap={7} $inset={3} />
          {children}
        </StepBody>
      </CardRow>
      <Strip $height={bottom} $low />
    </Card>
  );
}

export default function App() {
  return (
    <>
      <GlobalStyle />
      <Page>
        <AppWindow>
          <TitleBar>
            <TitleBlock>
              <Title>加工監控</Title>
              <Project>{"  臻禾二期"}</Project>
            </TitleBlock>
            <LogoBox><Logo /></LogoBox>
            <Clock>15:12:20</Clock>
            <WindowButton aria-label="最小化">
              <svg width="12" height="12" stroke="#555" strokeWidth="1.500"><path d="M0 6h12" /></svg>
            </WindowButton>
            <WindowButton aria-label="最大化">
              <svg width="12" height="12" fill="none" stroke="#555" strokeWidth="1.500"><rect x="1" y="1.500" width="10" height="9" /></svg>
            </WindowButton>
            <WindowButton aria-label="關閉">
              <svg width="12" height="12" stroke="#555" strokeWidth="1.800"><path d="M0 0L12 12M12 0L0 12" /></svg>
            </WindowButton>
          </TitleBar>

          <Middle>
            <Sidebar>
              {sideItems.map(([key, label]) => (
                <SideButton key={key}>
                  <SideTile>
                    <svg width="44" height="44" viewBox="0 0 44 44">{SideArt[key]}</svg>
                  </SideTile>
                  {label}
                </SideButton>
              ))}
            </Sidebar>

            <Frame>
              <Upper>
                <JobTable />
                <ProgressTable />
              </Upper>
              <ModelView />
              <Lower>
                <Log>
                  {logLines.map(([time, text, id], i) => (
                    <LogLine key={i}><span>{time}</span><span>{text}</span><span>{id}</span></LogLine>
                  ))}
                  <LogLine $alert><span>16:02</span><span>風源不足</span></LogLine>
                </Log>
                <MaterialInfo />
                <StepBody>
                  <ReadyHead>{"Ready  Go"}</ReadyHead>
                  <Steps names={["feed", "roller", "clamp"]} active="feed" $height={104} $top={19} $gap={17} />
                  <Steps names={["phone", "monitor"]} active="monitor" $height={100} $top={18} $gap={14} />
                  <Steps names={["drillAbove", "drillThrough"]} active="drillThrough" $height={98} $top={29} $gap={4} $last />
                </StepBody>
              </Lower>
            </Frame>
          </Middle>

          <SpeedBar>
            <RoundButton aria-label="減速">
              <svg width="24" height="24"><rect y="9" width="24" height="7" rx="1" fill="#f4f22f" /></svg>
            </RoundButton>
            <SpeedValue>手動速度：0%</SpeedValue>
            <RoundButton aria-label="加速">
              <svg width="24" height="24" fill="#f4f22f"><rect y="8" width="24" height="8" rx="1" /><rect x="8" width="8" height="24" rx="1" /></svg>
            </RoundButton>
          </SpeedBar>
        </AppWindow>

        <Aside>
          <ActionStack>
            <ActionPair>
              <ActionSlot><ActionButton>取消配對</ActionButton></ActionSlot>
              <ActionSlot><ActionButton>強制完成</ActionButton></ActionSlot>
            </ActionPair>
            <ActionSlot><ActionButton>測試打點</ActionButton></ActionSlot>
            <EmptySlot />
          </ActionStack>
          <JointRow>
            <JointSlot $left={3}><ActionButton>續接</ActionButton></JointSlot>
            <StepIcon name="roller" />
            <StepIcon name="clamp" />
          </JointRow>
          <StepCard top={3} bottom={2} second="phone"><FinalArea $muted /></StepCard>
        </Aside>

        <LeftCell $space={50}>
          <StepCard width={346} sliver={3} top={5} bottom={1} second="monitor">
            <FinalArea><GoButton>GO</GoButton></FinalArea>
          </StepCard>
        </LeftCell>
        <RightCell $space={50} $low>
          <StepCard top={3} bottom={1} second="phone"><FinalArea /></StepCard>
        </RightCell>

        <LeftCell $space={57}>
          <StepCard width={349} sliver={6} top={7} bottom={7} second="monitor">
            <GoArea>GO</GoArea>
          </StepCard>
        </LeftCell>
        <RightCell $space={61}>
          <StepCard top={3} bottom={2} second="phone"><FinalArea $muted /></StepCard>
        </RightCell>
      </Page>
    </>
  );
}
